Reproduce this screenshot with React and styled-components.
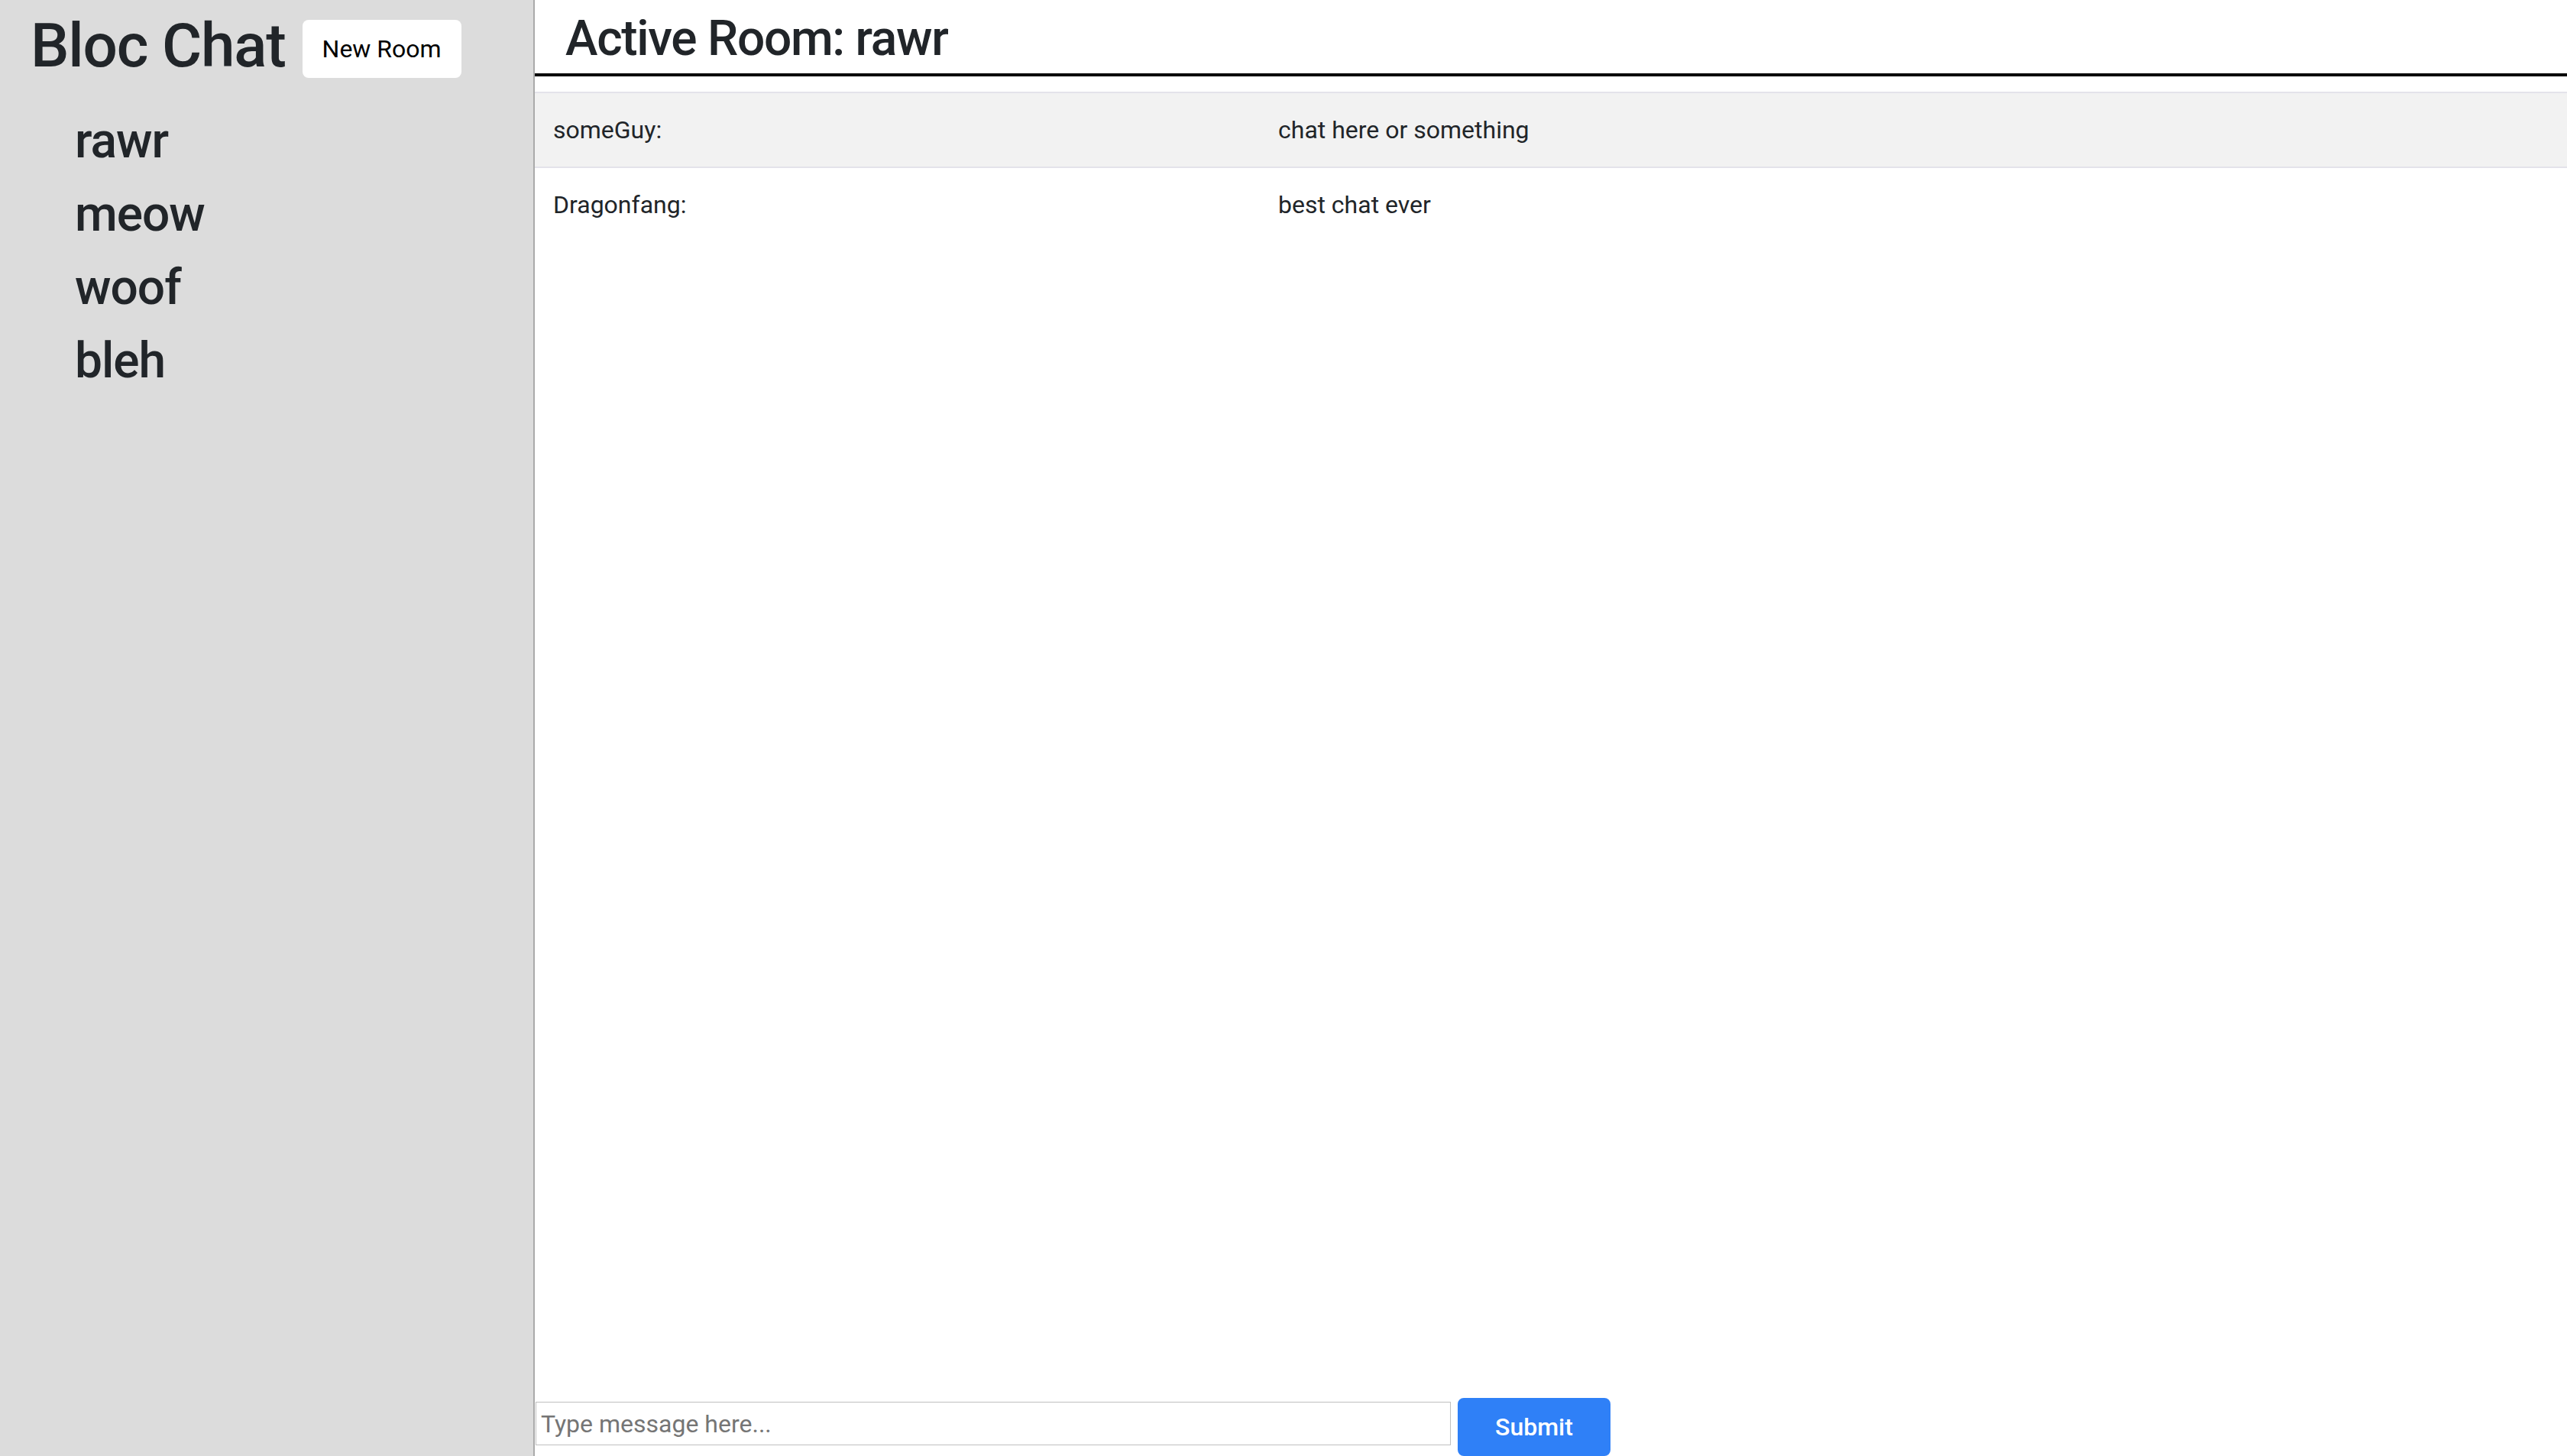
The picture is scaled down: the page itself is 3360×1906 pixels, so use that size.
import React from 'react';
import styled, { createGlobalStyle } from 'styled-components';

const rooms = ['rawr', 'meow', 'woof', 'bleh'];

const messages = [
  { username: 'someGuy', content: 'chat here or something' },
  { username: 'Dragonfang', content: 'best chat ever' },
];

class App extends React.Component {
  constructor(props) {
    super(props);
    this.state = {
      activeRoom: 'rawr',
      newMessage: '',
    };
    this.handleChange = this.handleChange.bind(this);
  }

  handleChange(e) {
    this.setState({ newMessage: e.target.value });
  }

  render() {
    return (
      <StyledContainer>
        <GlobalStyle />
        <StyledSidebar>
          <StyledSidebarHeader>
            <StyledTitle>Bloc Chat</StyledTitle>
            <StyledNewRoom type='button'>New Room</StyledNewRoom>
          </StyledSidebarHeader>
          <StyledRoomList>
            {rooms.map((room) => (
              <StyledRoom key={room}>{room}</StyledRoom>
            ))}
          </StyledRoomList>
        </StyledSidebar>
        <StyledMain>
          <StyledRoomHeader>
            <h2>Active Room: {this.state.activeRoom}</h2>
          </StyledRoomHeader>
          <StyledMessages>
            <StyledTable>
              <colgroup>
                <col style={{ width: 949 }} />
                <col />
              </colgroup>
              <tbody>
                {messages.map((msg, i) => (
                  <StyledRow key={msg.username} striped={i % 2 === 0}>
                    <td>{msg.username}:</td>
                    <td>{msg.content}</td>
                  </StyledRow>
                ))}
              </tbody>
            </StyledTable>
          </StyledMessages>
          <StyledForm onSubmit={(e) => e.preventDefault()}>
            <StyledInput
              type='text'
              placeholder='Type message here...'
              value={this.state.newMessage}
              onChange={this.handleChange}
            />
            <StyledSubmit type='submit'>Submit</StyledSubmit>
          </StyledForm>
        </StyledMain>
      </StyledContainer>
    );
  }
}

const GlobalStyle = createGlobalStyle`
  html, body {
    margin: 0;
    padding: 0;
  }
  body {
    font-family: Roboto, "Helvetica Neue", "Liberation Sans", Arial, sans-serif;
    color: #212529;
    background: white;
  }
  * {
    box-sizing: border-box;
  }
`;

const StyledContainer = styled.div`
  display: flex;
  width: 100%;
  height: 100vh;
  overflow: hidden;
`;

const StyledSidebar = styled.div`
  width: 700px;
  flex: none;
  background-color: #dcdcdc;
  border-right: 2px solid #aaaaaa;
  padding: 12px 0 0 40px;
`;

const StyledSidebarHeader = styled.div`
  display: flex;
  align-items: flex-start;
  gap: 22px;
`;

const StyledTitle = styled.h1`
  margin: 0;
  font-size: 80px;
  font-weight: 500;
  line-height: 1.2;
  letter-spacing: -1.2px;
`;

const StyledNewRoom = styled.button`
  margin-top: 14px;
  width: 208px;
  height: 76px;
  background: white;
  color: black;
  border: 2px solid transparent;
  border-radius: 8px;
  font-family: inherit;
  font-size: 32px;
  font-weight: 400;
  padding: 0;
`;

const StyledRoomList = styled.ul`
  list-style: none;
  margin: 29px 0 0;
  padding-left: 58px;
`;

const StyledRoom = styled.li`
  font-size: 64px;
  font-weight: 500;
  line-height: 96px;
  letter-spacing: -1px;
`;

const StyledMain = styled.div`
  flex: 1;
  display: flex;
  flex-direction: column;
  min-width: 0;
`;

const StyledRoomHeader = styled.div`
  padding: 13px 0 6px 40px;
  border-bottom: 4px solid black;
  h2 {
    margin: 0;
    font-size: 64px;
    font-weight: 500;
    line-height: 1.2;
    letter-spacing: -1.3px;
  }
`;

const StyledMessages = styled.div`
  flex: 1;
  padding-top: 20px;
`;

const StyledTable = styled.table`
  width: 100%;
  border-collapse: collapse;
  table-layout: fixed;
  font-size: 32px;
  line-height: 48px;
  td {
    padding: 24px;
    border-top: 2px solid #e4e3ea;
    vertical-align: top;
  }
`;

const StyledRow = styled.tr`
  background-color: ${(props) => (props.striped ? '#f2f2f2' : 'white')};
`;

const StyledForm = styled.form`
  display: flex;
  align-items: flex-start;
  height: 76px;
  padding-left: 1px;
`;

const StyledInput = styled.input`
  margin-top: 5px;
  width: 1198px;
  height: 57px;
  border: 1px solid #c0c0c0;
  padding: 0 6px;
  font-family: inherit;
  font-size: 32px;
  color: #212529;
  outline: none;
  &::placeholder {
    color: #757575;
  }
`;

const StyledSubmit = styled.button`
  margin-left: 9px;
  width: 200px;
  height: 76px;
  background-color: #2f80f7;
  color: white;
  border: 2px solid #2f80f7;
  border-radius: 8px;
  font-family: inherit;
  font-size: 32px;
  font-weight: 500;
  padding: 0;
`;

export default App;
